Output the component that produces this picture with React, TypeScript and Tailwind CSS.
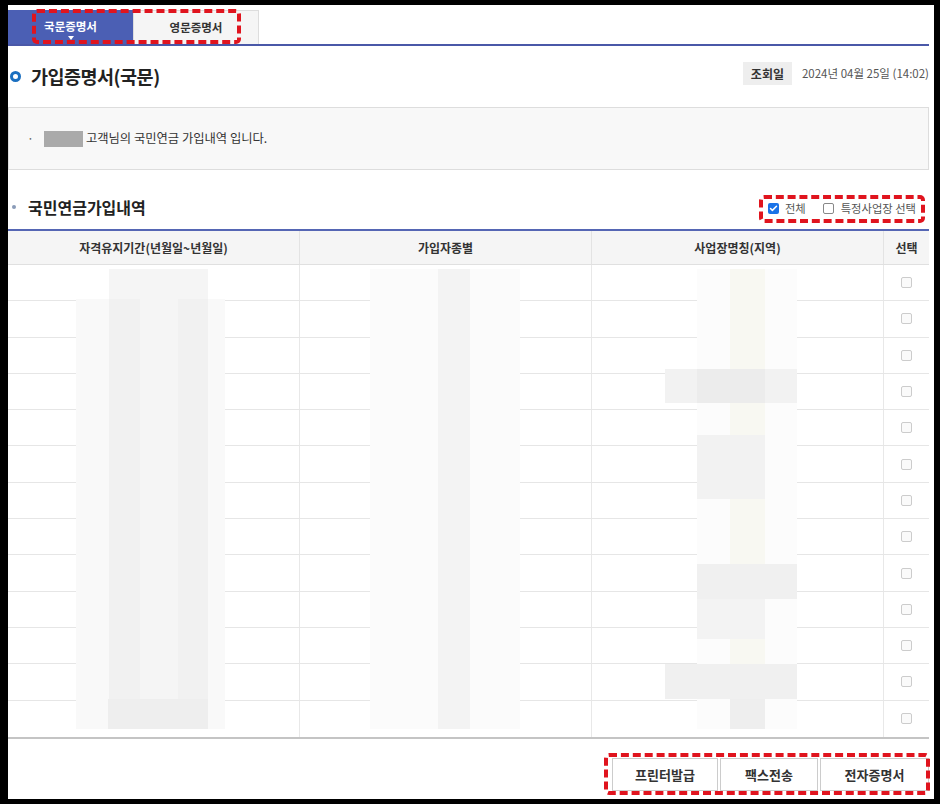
import { Check } from "lucide-react";

const font = { fontFamily: '"Noto Sans CJK KR", "Noto Sans", sans-serif' };

// redaction mosaic blocks, page coordinates (x, y, w, h, colour)
const mosaic: [number, number, number, number, string][] = [
  [76, 300, 149, 430, "#f9f9f9"],
  [109, 270, 99, 30, "#f5f5f5"],
  [109, 300, 31, 430, "#f1f1f1"],
  [140, 300, 38, 430, "#f5f5f5"],
  [178, 300, 30, 430, "#f1f1f1"],
  [108, 700, 100, 30, "#eeeeee"],
  [370, 270, 150, 460, "#fbfbfb"],
  [438, 270, 32, 460, "#f3f3f3"],
  [697, 270, 100, 460, "#fcfcfc"],
  [730, 270, 35, 460, "#f8f8f2"],
  [665, 370, 132, 34, "#f2f2f2"],
  [697, 370, 68, 34, "#ececec"],
  [697, 436, 68, 64, "#f2f2f2"],
  [697, 565, 100, 35, "#f0f0f0"],
  [697, 600, 68, 40, "#f3f3f3"],
  [665, 665, 132, 35, "#f0f0f0"],
  [730, 700, 35, 30, "#eeeeee"],
];

const rows = Array.from({ length: 13 });

function RedBox({ className }: { className: string }) {
  return <div className={`absolute border-[4px] border-dashed border-[#e0141e] rounded-[5px] ${className}`} />;
}

export default function App() {
  return (
    <div className="bg-black w-[940px] h-[804px] pt-[5px] pl-[8px]" style={font}>
      <div className="relative bg-white w-[926px] h-[794px] pr-[5px]">
        {/* tabs */}
        <div className="pt-[5px] flex border-b-2 border-[#4a58a8]">
          <div className="relative w-[125px] h-[34px] bg-[#4b5fb4] flex items-center justify-center text-white text-[11.5px] font-bold">
            국문증명서
            <span className="absolute bottom-[4px] left-1/2 -translate-x-1/2 w-0 h-0 border-l-[3px] border-r-[3px] border-t-[4px] border-l-transparent border-r-transparent border-t-white" />
          </div>
          <div className="w-[126px] h-[34px] bg-[#f5f5f5] border border-b-0 border-[#dddddd] flex items-center justify-center text-[#333] text-[11.5px] font-bold">
            영문증명서
          </div>
        </div>

        {/* title */}
        <div className="flex items-center justify-between h-[61px]">
          <div className="flex items-center gap-[10px] pl-[2px]">
            <span className="w-[11px] h-[11px] rounded-full border-[3px] border-[#1a6fc0]" />
            <h1 className="text-[18.5px] font-bold text-[#222] tracking-[-0.5px]">가입증명서(국문)</h1>
          </div>
          <div className="flex items-center gap-[10px] -mt-[6px]">
            <span className="h-[23px] px-[8px] bg-[#eeeeee] flex items-center text-[12px] font-bold text-[#333]">조회일</span>
            <span className="text-[11.5px] text-[#555]">2024년 04월 25일 (14:02)</span>
          </div>
        </div>

        {/* info box */}
        <div className="h-[63px] bg-[#f8f8f8] border border-[#dddddd] flex items-center pl-[18px] text-[12.3px] text-[#333]">
          <span className="text-[#666] mr-[10px]">·</span>
          <span className="w-[39px] h-[16px] bg-[#aaaaaa] mr-[3px]" />
          고객님의 국민연금 가입내역 입니다.
        </div>

        {/* section header */}
        <div className="flex items-end justify-between h-[59px] pb-[10px]">
          <div className="flex items-center gap-[12px] pl-[4px]">
            <span className="w-[4px] h-[4px] rounded-full bg-[#8a9bb8]" />
            <h2 className="text-[16px] font-bold text-[#222]">국민연금가입내역</h2>
          </div>
          <div className="flex items-center text-[11.3px] text-[#555] pr-[13px] pb-[2px]">
            <span className="w-[11px] h-[11px] rounded-[2px] bg-[#1a73e8] flex items-center justify-center mr-[6px]">
              <Check className="w-[9px] h-[9px] text-white" strokeWidth={4} />
            </span>
            전체
            <span className="w-[11px] h-[11px] rounded-[2px] border border-[#888] ml-[17px] mr-[7px]" />
            특정사업장 선택
          </div>
        </div>

        {/* table */}
        <div className="border-t-2 border-[#5566b4] border-b-2 border-b-[#c4c4c4]">
          <div className="grid grid-cols-[292px_292px_292px_1fr] h-[34px] bg-[#f5f5f5] border-b border-[#e0e0e0] text-[12px] font-bold text-[#333]">
            <div className="flex items-center justify-center border-r border-[#e3e3e3]">자격유지기간(년월일~년월일)</div>
            <div className="flex items-center justify-center border-r border-[#e3e3e3]">가입자종별</div>
            <div className="flex items-center justify-center border-r border-[#e3e3e3]">사업장명칭(지역)</div>
            <div className="flex items-center justify-center">선택</div>
          </div>
          <div className="relative">
            {rows.map((_, i) => (
              <div
                key={i}
                className={`grid grid-cols-[292px_292px_292px_1fr] h-[36.3px] ${i < 12 ? "border-b border-[#e6e6e6]" : ""}`}
              >
                <div className="border-r border-[#e8e8e8]" />
                <div className="border-r border-[#e8e8e8]" />
                <div className="border-r border-[#e8e8e8]" />
                <div className="flex items-center justify-center">
                  <span className="w-[11px] h-[11px] rounded-[2px] border border-[#cccccc] bg-[#fafafa]" />
                </div>
              </div>
            ))}
            {mosaic.map(([x, y, w, h, c], i) => (
              <div
                key={i}
                className="absolute"
                style={{ left: x - 8, top: y - 266, width: w, height: h, background: c }}
              />
            ))}
          </div>
        </div>

        {/* buttons */}
        <div className="flex justify-end gap-[2px] mt-[19px]">
          <button className="w-[106px] h-[33px] border border-[#cccccc] bg-white text-[13px] font-bold text-[#333]">프린터발급</button>
          <button className="w-[98px] h-[33px] border border-[#cccccc] bg-white text-[13px] font-bold text-[#333]">팩스전송</button>
          <button className="w-[109px] h-[33px] border border-[#cccccc] bg-white text-[13px] font-bold text-[#333]">전자증명서</button>
        </div>

        {/* annotation boxes */}
        <RedBox className="left-[24px] top-[4px] w-[209px] h-[35px]" />
        <RedBox className="left-[751px] top-[190px] w-[166px] h-[28px]" />
        <RedBox className="left-[596px] top-[748px] w-[326px] h-[42px]" />
      </div>
    </div>
  );
}
